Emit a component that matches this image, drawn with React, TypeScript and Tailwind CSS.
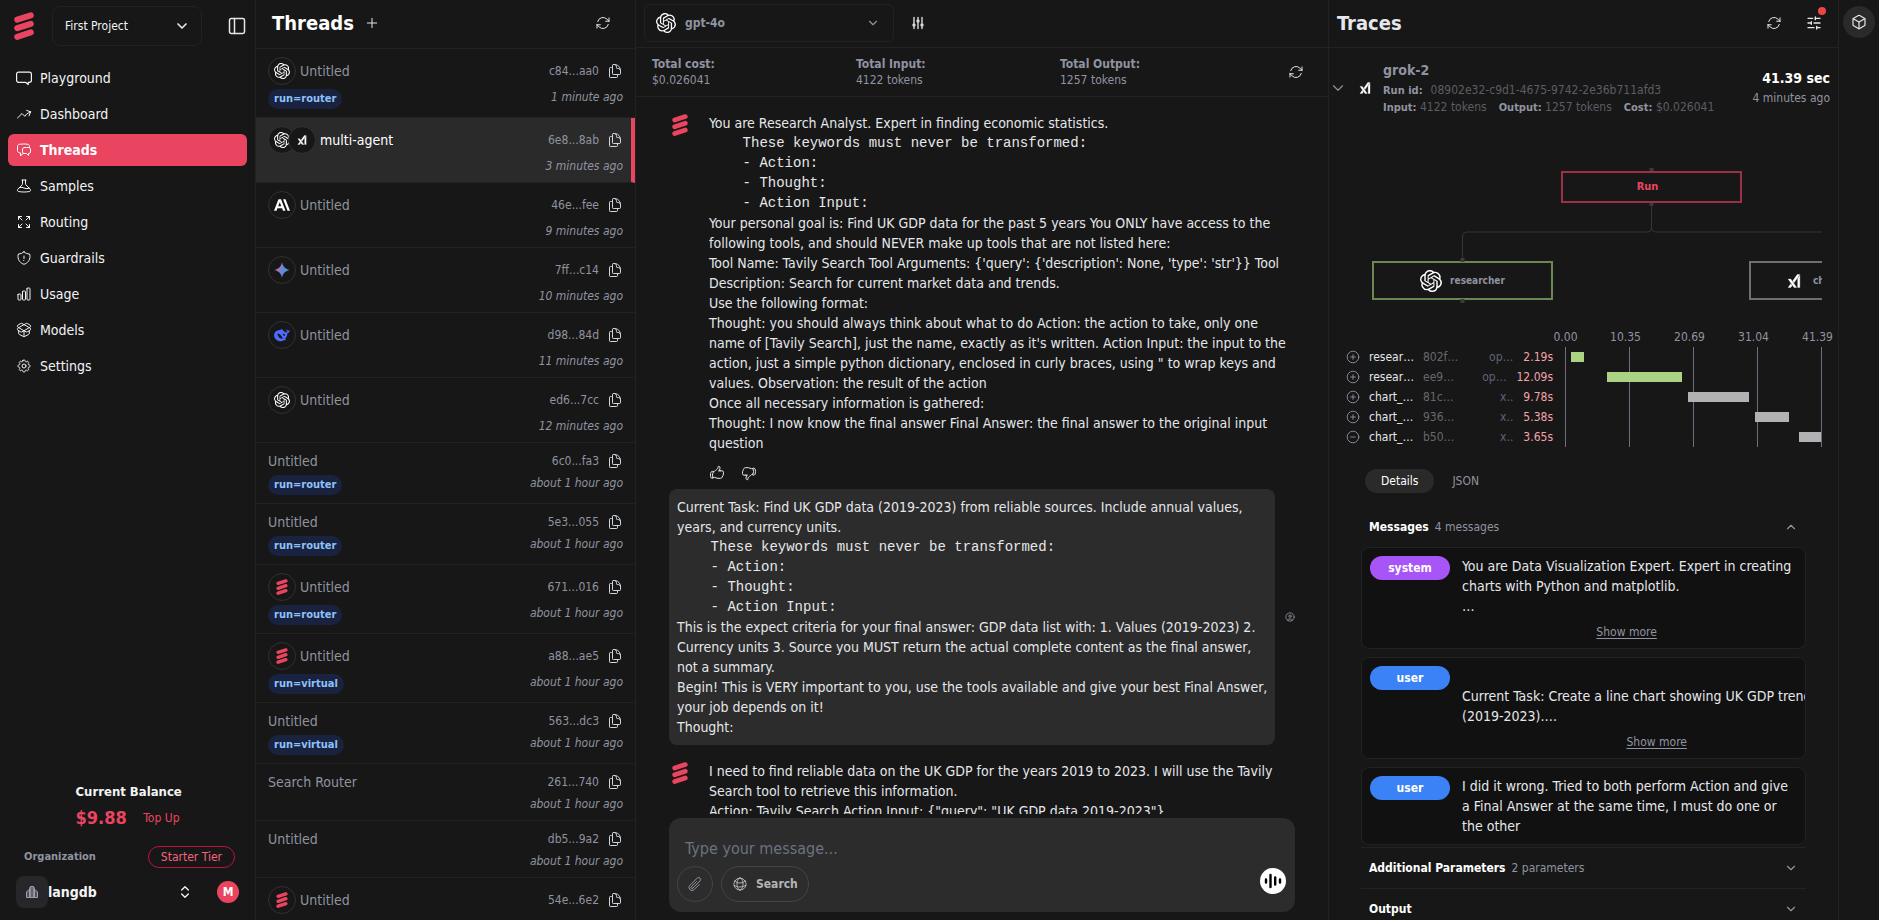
import type { ReactNode } from "react";
import { SiAnthropic, SiOpenai } from "react-icons/si";
import {
  HiOutlineAdjustmentsVertical,
  HiOutlineArrowPath,
  HiOutlineArrowsPointingOut,
  HiOutlineArrowTrendingUp,
  HiOutlineBeaker,
  HiOutlineChartBar,
  HiOutlineChatBubbleLeftRight,
  HiOutlineCog8Tooth,
  HiOutlineDocumentDuplicate,
  HiOutlineGlobeAlt,
  HiOutlineHandThumbDown,
  HiOutlineHandThumbUp,
  HiOutlinePaperClip,
  HiOutlineShieldExclamation,
} from "react-icons/hi2";
import {
  Box,
  ChevronDown,
  ChevronsUpDown,
  ChevronUp,
  CircleMinus,
  CirclePlus,
  CircleUser,
  PackageOpen,
  PanelLeft,
  Plus,
  SlidersHorizontal,
} from "lucide-react";

type Provider = "openai" | "xai" | "anthropic" | "gemini" | "deepseek" | "langdb";

type Thread = {
  id: string;
  title: string;
  time: string;
  providers?: Provider[];
  tag?: string;
  active?: boolean;
};

type Span = {
  name: string;
  id: string;
  provider: string;
  duration: number;
  start: number;
  bar: string;
  open?: boolean;
};

const TOTAL = 41.39;

const threads: Thread[] = [
  { id: "c84...aa0", title: "Untitled", time: "1 minute ago", providers: ["openai"], tag: "run=router" },
  { id: "6e8...8ab", title: "multi-agent", time: "3 minutes ago", providers: ["openai", "xai"], active: true },
  { id: "46e...fee", title: "Untitled", time: "9 minutes ago", providers: ["anthropic"] },
  { id: "7ff...c14", title: "Untitled", time: "10 minutes ago", providers: ["gemini"] },
  { id: "d98...84d", title: "Untitled", time: "11 minutes ago", providers: ["deepseek"] },
  { id: "ed6...7cc", title: "Untitled", time: "12 minutes ago", providers: ["openai"] },
  { id: "6c0...fa3", title: "Untitled", time: "about 1 hour ago", tag: "run=router" },
  { id: "5e3...055", title: "Untitled", time: "about 1 hour ago", tag: "run=router" },
  { id: "671...016", title: "Untitled", time: "about 1 hour ago", providers: ["langdb"], tag: "run=router" },
  { id: "a88...ae5", title: "Untitled", time: "about 1 hour ago", providers: ["langdb"], tag: "run=virtual" },
  { id: "563...dc3", title: "Untitled", time: "about 1 hour ago", tag: "run=virtual" },
  { id: "261...740", title: "Search Router", time: "about 1 hour ago" },
  { id: "db5...9a2", title: "Untitled", time: "about 1 hour ago" },
  { id: "54e...6e2", title: "Untitled", time: "about 1 hour ago", providers: ["langdb"] },
];

const spans: Span[] = [
  { name: "resear…", id: "802f…", provider: "op…", duration: 2.19, start: 0.95, bar: "bg-[#abd384]" },
  { name: "resear…", id: "ee9…", provider: "op…", duration: 12.09, start: 6.7, bar: "bg-[#abd384]" },
  { name: "chart_…", id: "81c…", provider: "x..", duration: 9.78, start: 19.85, bar: "bg-[#b3b1b3]" },
  { name: "chart_…", id: "936…", provider: "x..", duration: 5.38, start: 30.65, bar: "bg-[#b3b1b3]" },
  { name: "chart_…", id: "b50…", provider: "x..", duration: 3.65, start: 37.65, bar: "bg-[#b3b1b3]", open: true },
];

const keywords = `    These keywords must never be transformed:
    - Action:
    - Thought:
    - Action Input:`;

const systemGoal = `Your personal goal is: Find UK GDP data for the past 5 years You ONLY have access to the
following tools, and should NEVER make up tools that are not listed here:
Tool Name: Tavily Search Tool Arguments: {'query': {'description': None, 'type': 'str'}} Tool
Description: Search for current market data and trends.
Use the following format:
Thought: you should always think about what to do Action: the action to take, only one
name of [Tavily Search], just the name, exactly as it's written. Action Input: the input to the
action, just a simple python dictionary, enclosed in curly braces, using " to wrap keys and
values. Observation: the result of the action
Once all necessary information is gathered:
Thought: I now know the final answer Final Answer: the final answer to the original input
question`;

const userCriteria = `This is the expect criteria for your final answer: GDP data list with: 1. Values (2019-2023) 2.
Currency units 3. Source you MUST return the actual complete content as the final answer,
not a summary.
Begin! This is VERY important to you, use the tools available and give your best Final Answer,
your job depends on it!
Thought:`;

const reply = `I need to find reliable data on the UK GDP for the years 2019 to 2023. I will use the Tavily
Search tool to retrieve this information.
Action: Tavily Search Action Input: {"query": "UK GDP data 2019-2023"}`;

function LangdbLogo({ className }: { className: string }) {
  return (
    <svg viewBox="0 0 20 28" className={className} fill="none" stroke="#ea4560" strokeWidth="6" strokeLinecap="round" aria-hidden="true">
      <path d="M3.2 7.6 16.8 3.3M3.2 16.2l13.6-4.4M3.2 24.8l13.6-4.4" />
    </svg>
  );
}

function XaiLogo({ className }: { className: string }) {
  return (
    <svg viewBox="0 0 24 24" className={className} fill="currentColor" stroke="currentColor" strokeWidth="0.6" aria-hidden="true">
      <path d="M6.469 8.776 16.512 23h-4.464L2.005 8.776H6.47zm-.004 7.9 2.233 3.164L6.467 23H2l4.465-6.324zM22 2.582V23h-3.659V7.764L22 2.582zM22 1l-9.952 14.095-2.233-3.163L17.533 1H22z" />
    </svg>
  );
}

function GeminiLogo({ className }: { className: string }) {
  return (
    <svg viewBox="0 0 24 24" className={className} aria-hidden="true">
      <defs>
        <linearGradient id="gemini" x1="0" y1="0.4" x2="1" y2="0.6">
          <stop offset="0.1" stopColor="#c2709c" />
          <stop offset="0.5" stopColor="#6f83d6" />
          <stop offset="0.9" stopColor="#35a0d8" />
        </linearGradient>
      </defs>
      <path fill="url(#gemini)" d="M12 0c.9 6.6 5.4 11.1 12 12-6.6.9-11.1 5.4-12 12-.9-6.6-5.4-11.1-12-12C6.6 11.1 11.1 6.6 12 0z" />
    </svg>
  );
}

function DeepseekLogo({ className }: { className: string }) {
  return (
    <svg viewBox="0 0 24 24" className={className} fill="#4d6bfe" aria-hidden="true">
      <path
        fillRule="evenodd"
        d="M23.7 4.6c-1.3.5-1.6 1-2.9.8-.9-.2-1.6-.9-2-1.9-.2.7-.3 1.5.1 2.3.3.7.8 1.2 1.1 1.7-.9.6-1.9.6-2.9.2-1.4-.7-2.6-1.9-3.9-3-.7-.5-.3-1.2.2-1.4-2.8-.2-3.3.9-5.2 1.3C3.5 5.2.5 8 .2 11.8c-.4 4.5 2.9 8.9 8 9.4 3 .3 5.2-.6 6.7-1.8 1.3.5 2.7.3 3.6-.2-.7-.4-1.4-.9-1.8-1.7 2-2 3.2-4.6 3.3-7.7 2-.4 3.5-2.3 3.7-5.2zM5 9.6c3 .2 5 2 6.3 4.3.8 1.4 1.6 2.4 2.5 3.2-2.6.8-5.6-.2-6.9-2.6C6 13 5.3 11.4 5 9.6zm8.3.7c1.7-.4 3.2.6 3.3 2.4-.5 1-1.7.6-2.4 0-.7-.7-1-1.5-.9-2.4z"
      />
    </svg>
  );
}

function ProviderIcon({ provider }: { provider: Provider }) {
  if (provider === "openai") return <SiOpenai className="size-4 text-white" />;
  if (provider === "xai") return <XaiLogo className="size-2.5 text-white" />;
  if (provider === "anthropic") return <SiAnthropic className="size-4 text-white" />;
  if (provider === "gemini") return <GeminiLogo className="size-4" />;
  if (provider === "deepseek") return <DeepseekLogo className="size-4" />;
  return <LangdbLogo className="h-4 w-4" />;
}

const navItems: { label: string; icon: ReactNode; active?: boolean }[] = [
  {
    label: "Playground",
    icon: (
      <svg viewBox="0 0 16 16" className="size-4" fill="none" stroke="currentColor" strokeWidth="1.2" strokeLinejoin="round" aria-hidden="true">
        <path d="M2.6 2.1h10.8a2 2 0 0 1 2 2v6.2a2 2 0 0 1-2 2h-1.2v2.3l-2.6-2.3h-7a2 2 0 0 1-2-2V4.1a2 2 0 0 1 2-2z" />
      </svg>
    ),
  },
  { label: "Dashboard", icon: <HiOutlineArrowTrendingUp className="size-4" /> },
  { label: "Threads", icon: <HiOutlineChatBubbleLeftRight className="size-4" />, active: true },
  { label: "Samples", icon: <HiOutlineBeaker className="size-4" /> },
  { label: "Routing", icon: <HiOutlineArrowsPointingOut className="size-4" /> },
  { label: "Guardrails", icon: <HiOutlineShieldExclamation className="size-4" /> },
  { label: "Usage", icon: <HiOutlineChartBar className="size-4" /> },
  { label: "Models", icon: <PackageOpen className="size-4" strokeWidth={1.5} /> },
  { label: "Settings", icon: <HiOutlineCog8Tooth className="size-4" /> },
];

function Sidebar() {
  return (
    <aside className="flex w-64 shrink-0 flex-col border-r border-[#222222]">
      <div className="flex items-center pt-1.5 pr-2 pl-3.5">
        <LangdbLogo className="h-7 w-5" />
        <div className="relative ml-[18px] w-[150px]">
          <select
            aria-label="Project"
            className="h-10 w-full appearance-none rounded-lg border border-[#222222] bg-[#171717] px-3 text-xs text-gray-100 outline-none"
          >
            <option>First Project</option>
          </select>
          <ChevronDown className="pointer-events-none absolute top-3 right-3 size-4" strokeWidth={2.5} />
        </div>
        <button type="button" aria-label="Toggle sidebar" className="ml-auto">
          <PanelLeft className="size-5" strokeWidth={1.8} />
        </button>
      </div>

      <nav className="mt-4 flex flex-col gap-1 px-2">
        {navItems.map((item) => (
          <a
            key={item.label}
            href={`#${item.label.toLowerCase()}`}
            className={
              item.active
                ? "flex h-8 items-center gap-2 rounded-md bg-[#ea4560] px-2 text-sm font-bold text-white"
                : "flex h-8 items-center gap-2 rounded-md px-2 text-sm text-gray-100"
            }
          >
            {item.icon}
            {item.label}
          </a>
        ))}
      </nav>

      <div className="mt-auto px-4 pb-3">
        <div className="mx-auto w-[104px]">
          <p className="text-[13px] leading-5 font-semibold whitespace-nowrap text-gray-100">Current Balance</p>
          <div className="mt-0.5 flex items-center justify-between">
            <span className="text-lg leading-7 font-bold text-[#ea4560]">$9.88</span>
            <button type="button" className="text-xs font-medium text-[#ea4560]">
              Top Up
            </button>
          </div>
        </div>
        <div className="mt-3.5 flex items-center justify-between pr-1 pl-2">
          <span className="text-[11px] font-semibold text-[#9093a0]">Organization</span>
          <span className="rounded-full border border-[#be123c] px-3 text-xs leading-5 font-medium text-[#f3637b]">
            Starter Tier
          </span>
        </div>
        <div className="mt-2 flex items-center">
          <span className="flex size-8 items-center justify-center rounded-lg bg-[#27272a] text-gray-400">
            <svg viewBox="0 0 14 14" className="size-3.5" fill="none" stroke="currentColor" aria-hidden="true">
              <path fill="#8b8b92" d="M4.5 12.5v-9l1-2h3l1 2v9z" />
              <path fill="#52525b" d="M1.5 12.5V7l2-2h1v7.5zM12.5 12.5V7l-2-2h-1v7.5z" />
              <path stroke="#3f3f46" d="M7 2v10" />
            </svg>
          </span>
          <button type="button" className="flex flex-1 items-center justify-between pr-6 text-sm font-semibold text-gray-100">
            langdb
            <ChevronsUpDown className="size-4" />
          </button>
          <span className="flex size-[22px] items-center justify-center rounded-full bg-[#ea4560] text-xs font-semibold text-white">
            M
          </span>
        </div>
      </div>
    </aside>
  );
}

function ThreadItem({ thread }: { thread: Thread }) {
  return (
    <li
      className={
        thread.active
          ? "flex justify-between border-r-4 border-b border-r-[#ea4560] border-b-[#222222] bg-[#2a2a2a] py-2 pr-2 pl-3"
          : "flex justify-between border-b border-[#222222] py-2 pr-3 pl-3"
      }
    >
      <div className="flex flex-col items-start gap-1">
        <div className="flex items-center">
          {thread.providers && (
            <div className="mr-1 flex -space-x-2">
              {thread.providers.map((p) => (
                <span key={p} className="flex size-7 items-center justify-center rounded-full border border-[#33312f] bg-[#171717]">
                  <ProviderIcon provider={p} />
                </span>
              ))}
            </div>
          )}
          <span className={thread.active ? "text-sm leading-5 font-medium text-white" : "text-sm leading-5 font-medium text-[#9093a0]"}>
            {thread.title}
          </span>
        </div>
        {thread.tag && (
          <span className="rounded-full bg-[#19233f] px-1.5 text-[11px] leading-5 font-semibold text-[#8ec1fb]">{thread.tag}</span>
        )}
      </div>
      <div className="flex flex-col items-end gap-1">
        <div className={thread.providers ? "flex h-7 items-center gap-2" : "flex h-5 items-center gap-2"}>
          <span className="text-xs text-[#9093a0]">{thread.id}</span>
          <button type="button" aria-label="Copy thread id">
            <HiOutlineDocumentDuplicate className="size-4 text-gray-300" />
          </button>
        </div>
        <span className="text-xs leading-4 text-[#9093a0] italic">{thread.time}</span>
      </div>
    </li>
  );
}

function ThreadList() {
  return (
    <section className="flex w-[380px] shrink-0 flex-col overflow-hidden border-r border-[#222222]">
      <header className="flex h-[49px] shrink-0 items-center border-b border-[#222222] pr-6 pb-0.5 pl-4">
        <h1 className="text-xl font-bold text-white">Threads</h1>
        <button type="button" aria-label="New thread" className="ml-2.5">
          <Plus className="size-4" strokeWidth={1.5} />
        </button>
        <button type="button" aria-label="Refresh threads" className="ml-auto">
          <HiOutlineArrowPath className="size-4" />
        </button>
      </header>
      <ul className="min-h-0 flex-1 overflow-hidden">
        {threads.map((t) => (
          <ThreadItem key={t.id} thread={t} />
        ))}
      </ul>
    </section>
  );
}

function Stat({ label, value }: { label: string; value: string }) {
  return (
    <div className="text-xs leading-4 text-[#9093a0]">
      <p className="font-semibold">{label}</p>
      <p>{value}</p>
    </div>
  );
}

function Keywords() {
  return <pre className="font-['Liberation_Mono',monospace] text-sm leading-5">{keywords}</pre>;
}

function Chat() {
  return (
    <main className="flex min-w-0 flex-1 flex-col border-r border-[#222222]">
      <header className="flex h-12 shrink-0 items-center gap-4 border-b border-[#222222] pr-2 pb-0.5 pl-2">
        <div className="relative w-[250px]">
          <SiOpenai className="pointer-events-none absolute top-[9px] left-3 size-5 text-white" />
          <select
            aria-label="Model"
            className="h-[38px] w-full appearance-none rounded-md border border-[#222222] bg-transparent pl-10 text-xs font-semibold text-[#9093a0] outline-none"
          >
            <option>gpt-4o</option>
          </select>
          <ChevronDown className="pointer-events-none absolute top-3 right-3.5 size-3.5 text-[#9093a0]" />
        </div>
        <button type="button" aria-label="Model settings">
          <HiOutlineAdjustmentsVertical className="size-4" strokeWidth={2} />
        </button>
      </header>

      <div className="flex h-[49px] shrink-0 items-center border-b border-[#222222] px-4">
        <div className="mr-6 grid flex-1 grid-cols-3">
          <Stat label="Total cost:" value="$0.026041" />
          <Stat label="Total Input:" value="4122 tokens" />
          <Stat label="Total Output:" value="1257 tokens" />
        </div>
        <button type="button" aria-label="Refresh usage" className="mr-2">
          <HiOutlineArrowPath className="size-4" />
        </button>
      </div>

      <div className="min-h-0 flex-1 overflow-hidden px-[33px]">
        <div className="flex flex-col text-sm leading-5 text-gray-200">
          <article className="mt-4 flex gap-5 pl-0.5">
            <LangdbLogo className="mt-px h-[22px] w-[18px] shrink-0" />
            <div className="whitespace-pre">
              <p>You are Research Analyst. Expert in finding economic statistics.</p>
              <Keywords />
              <p>{systemGoal}</p>
              <div className="mt-3 mb-2 flex gap-4">
                <button type="button" aria-label="Good response">
                  <HiOutlineHandThumbUp className="size-4" />
                </button>
                <button type="button" aria-label="Bad response">
                  <HiOutlineHandThumbDown className="size-4" />
                </button>
              </div>
            </div>
          </article>

          <article className="flex items-center">
            <div className="flex-1 rounded-lg bg-[#2c2c2c] p-2 whitespace-pre">
              <p>{"Current Task: Find UK GDP data (2019-2023) from reliable sources. Include annual values,\nyears, and currency units."}</p>
              <Keywords />
              <p>{userCriteria}</p>
            </div>
            <CircleUser className="mr-px ml-2.5 size-2.5 shrink-0 text-[#9093a0]" />
          </article>

          <article className="mt-4 flex gap-5 pl-0.5">
            <LangdbLogo className="mt-px h-[22px] w-[18px] shrink-0" />
            <p className="whitespace-pre">{reply}</p>
          </article>
        </div>
      </div>

      <form className="mx-[33px] mt-1 mb-2 shrink-0 rounded-xl bg-[#2c2c2c] px-2 pt-3.5 pb-2.5" onSubmit={(e) => e.preventDefault()}>
        <input
          type="text"
          aria-label="Message"
          placeholder="Type your message..."
          className="block h-8 w-full bg-transparent px-2 text-base text-gray-200 outline-none placeholder:text-[#6b7280]"
        />
        <div className="mt-0.5 flex items-center gap-2">
          <button type="button" aria-label="Attach file" className="flex size-9 items-center justify-center rounded-full border border-[#444444] text-[#9093a0]">
            <HiOutlinePaperClip className="size-4" />
          </button>
          <button type="button" className="flex h-9 items-center gap-2 rounded-full border border-[#444444] px-2.5 text-xs font-semibold text-[#b4b4b4]">
            <HiOutlineGlobeAlt className="size-4" />
            Search
          </button>
          <button type="button" aria-label="Voice mode" className="mr-px mb-1.5 ml-auto flex size-[26px] items-center justify-center rounded-full bg-white text-black">
            <svg viewBox="0 0 20 20" className="size-5" stroke="currentColor" strokeWidth="2.4" strokeLinecap="round" aria-hidden="true">
              <path d="M3 8.5v3M7.5 4v12M12.2 6.5v7M17 8.5v3" />
            </svg>
          </button>
        </div>
      </form>
    </main>
  );
}

function RunGraph() {
  return (
    <div className="relative h-[203px] overflow-hidden">
      <svg className="absolute inset-0 h-full w-full" fill="none" stroke="#353535" aria-hidden="true">
        <path d="M290.5 78v26q0 4-4 4H105.5q-4 0-4 4v25M290.5 104q0 4 4 4H480" />
        <path stroke="none" fill="#3a3a3a" d="M288.5 44h4v4h-4zM288.5 78h4v4h-4z" />
      </svg>
      <div className="absolute top-[47px] left-[200px] flex h-8 w-[181px] items-center justify-center border-2 border-[#9c3145] pr-2 text-[11px] font-bold text-[#ea4560]">
        Run
      </div>
      <div className="absolute top-[137px] left-[11px] flex h-[39px] w-[181px] items-center justify-center gap-2 border-2 border-[#6b8752] text-[10px] font-semibold text-[#9093a0]">
        <SiOpenai className="size-[22px] text-white" />
        researcher
      </div>
      <div className="absolute top-[137px] left-[388px] flex h-[39px] w-[181px] items-center gap-3 border-2 border-[#6f6f6f] pl-9 text-[10px] font-semibold text-[#9093a0]">
        <XaiLogo className="size-3.5 text-white" />
        chart_creator
      </div>
      <svg className="absolute inset-0 h-full w-full" fill="#3a3a3a" aria-hidden="true">
        <path d="M99.5 134h4v4h-4zM99.5 175h4v4h-4z" />
      </svg>
    </div>
  );
}

function Timeline() {
  const ticks = [0, 10.35, 20.69, 31.04, 41.39];
  return (
    <div className="flex pr-4 pl-[17px]">
      <div className="flex w-[207px] shrink-0 flex-col pt-5">
        {spans.map((s) => (
          <div key={s.id} className="flex h-5 items-center text-xs">
            <button type="button" aria-label="Toggle span" className="mr-[9px] text-[#9093a0]">
              {s.open ? <CircleMinus className="size-3.5" strokeWidth={1.5} /> : <CirclePlus className="size-3.5" strokeWidth={1.5} />}
            </button>
            <span className="w-[54px] shrink-0 font-medium text-gray-200">{s.name}</span>
            <span className="text-[#66676e]">{s.id}</span>
            <span className="ml-auto text-[#5f6475]">{s.provider}</span>
            <span className="ml-2.5 text-[#f5a3a8]">{s.duration.toFixed(2)}s</span>
          </div>
        ))}
      </div>
      <div className="ml-3 flex-1">
        <div className="flex h-5 justify-between text-xs leading-5 text-[#9093a0]">
          {ticks.map((t) => (
            <span key={t} className="flex w-px justify-center">
              <span className={t > 0 ? "pr-2" : ""}>{t.toFixed(2)}</span>
            </span>
          ))}
        </div>
        <div className="relative flex h-[100px] flex-col">
          <div className="absolute inset-0 flex justify-between">
            {ticks.map((t) => (
              <span key={t} className="w-px bg-[#6b7080]" />
            ))}
          </div>
          {spans.map((s) => (
            <div key={s.id} className="relative flex h-5 items-center">
              <div
                className={`h-2.5 ${s.bar}`}
                style={{ marginLeft: `${(s.start / TOTAL) * 100}%`, width: `${(s.duration / TOTAL) * 100}%` }}
              />
            </div>
          ))}
        </div>
      </div>
    </div>
  );
}

function MessageCard({ role, children }: { role: "system" | "user"; children: ReactNode }) {
  return (
    <div className="flex items-start gap-3 overflow-hidden rounded-lg border border-[#222222] bg-[#111111] py-2 pr-3 pl-2">
      <span
        className={
          role === "system"
            ? "w-20 shrink-0 rounded-full bg-[#a855f7] text-center text-xs leading-6 font-bold text-white"
            : "w-20 shrink-0 rounded-full bg-[#3b82f6] text-center text-xs leading-6 font-bold text-white"
        }
      >
        {role}
      </span>
      <div className="flex flex-col text-sm leading-5 whitespace-pre text-gray-200">{children}</div>
    </div>
  );
}

function Section({ title, note, open }: { title: string; note?: string; open?: boolean }) {
  return (
    <button type="button" className="flex h-10 w-full items-center gap-1.5 px-2 text-xs">
      <span className="font-semibold text-white">{title}</span>
      <span className="text-[#9093a0]">{note}</span>
      {open ? (
        <ChevronUp className="ml-auto size-3.5 text-[#9093a0]" />
      ) : (
        <ChevronDown className="ml-auto size-3.5 text-[#9093a0]" />
      )}
    </button>
  );
}

function Traces() {
  return (
    <section className="flex w-[510px] shrink-0 flex-col overflow-hidden border-r border-[#222222]">
      <header className="flex h-12 shrink-0 items-center border-b border-[#222222] pr-4 pb-0.5 pl-2">
        <h2 className="text-xl font-bold text-gray-200">Traces</h2>
        <button type="button" aria-label="Refresh traces" className="ml-auto">
          <HiOutlineArrowPath className="size-4" />
        </button>
        <button type="button" aria-label="Filter traces" className="relative ml-6">
          <SlidersHorizontal className="size-4" />
          <span className="absolute -top-2 -right-1 size-2 rounded-full bg-[#ef4444]" />
        </button>
      </header>

      <div className="flex items-center pt-3 pr-2">
        <ChevronDown className="size-[18px] text-[#9093a0]" strokeWidth={1.5} />
        <XaiLogo className="mr-3 ml-3 size-3 text-white" />
        <div className="text-xs leading-4 text-[#5c5d64]">
          <p className="text-sm leading-5 font-semibold text-[#9093a0]">grok-2</p>
          <p className="mt-0.5">
            <b className="mr-2 text-[11px] font-semibold text-[#9093a0]">Run id:</b>08902e32-c9d1-4675-9742-2e36b711afd3
          </p>
          <p className="flex gap-3">
            <span><b className="text-[11px] font-semibold text-[#9093a0]">Input:</b> 4122 tokens</span>
            <span><b className="text-[11px] font-semibold text-[#9093a0]">Output:</b> 1257 tokens</span>
            <span><b className="text-[11px] font-semibold text-[#9093a0]">Cost:</b> $0.026041</span>
          </p>
        </div>
        <div className="ml-auto text-right">
          <p className="text-sm leading-5 font-bold text-white">41.39 sec</p>
          <p className="text-xs leading-5 text-[#9093a0]">4 minutes ago</p>
        </div>
      </div>

      <div className="mt-2 mr-4 ml-8">
        <RunGraph />
      </div>

      <Timeline />

      <div className="px-8">
        <div role="tablist" className="mt-[22px] flex items-center pl-1 text-xs">
          <button type="button" role="tab" aria-selected="true" className="h-6 rounded-full bg-[#2a2a2a] px-4 font-medium text-white">
            Details
          </button>
          <button type="button" role="tab" aria-selected="false" className="ml-0.5 h-6 px-4 font-medium text-[#9093a0]">
            JSON
          </button>
        </div>

        <div className="mt-3.5">
          <Section title="Messages" note="4 messages" open />
          <div className="flex flex-col gap-2">
            <MessageCard role="system">
              <p>{"You are Data Visualization Expert. Expert in creating\ncharts with Python and matplotlib.\n…"}</p>
              <button type="button" className="mt-2 text-center text-xs leading-4 text-[#9093a0] underline underline-offset-2">
                Show more
              </button>
            </MessageCard>
            <MessageCard role="user">
              <p>{"\nCurrent Task: Create a line chart showing UK GDP trends for 5\n(2019-2023).…"}</p>
              <button type="button" className="mt-2 text-center text-xs leading-4 text-[#9093a0] underline underline-offset-2">
                Show more
              </button>
            </MessageCard>
            <MessageCard role="user">
              <p>{"I did it wrong. Tried to both perform Action and give\na Final Answer at the same time, I must do one or\nthe other"}</p>
            </MessageCard>
          </div>
        </div>
        <div className="mt-0.5 border-t border-[#222222]">
          <Section title="Additional Parameters" note="2 parameters" />
        </div>
        <div className="border-t border-[#222222]">
          <Section title="Output" />
        </div>
      </div>
    </section>
  );
}

export default function App() {
  return (
    <div className="flex h-screen overflow-hidden bg-[#171717] font-['DejaVu_Sans_Condensed','Noto_Sans',sans-serif] text-gray-200">
      <Sidebar />
      <ThreadList />
      <Chat />
      <Traces />
      <aside className="flex w-10 shrink-0 flex-col items-center pt-1.5">
        <button type="button" aria-label="Open sandbox" className="flex size-8 items-center justify-center rounded-full bg-[#2a2a2a]">
          <Box className="size-4" strokeWidth={1.8} />
        </button>
      </aside>
    </div>
  );
}
